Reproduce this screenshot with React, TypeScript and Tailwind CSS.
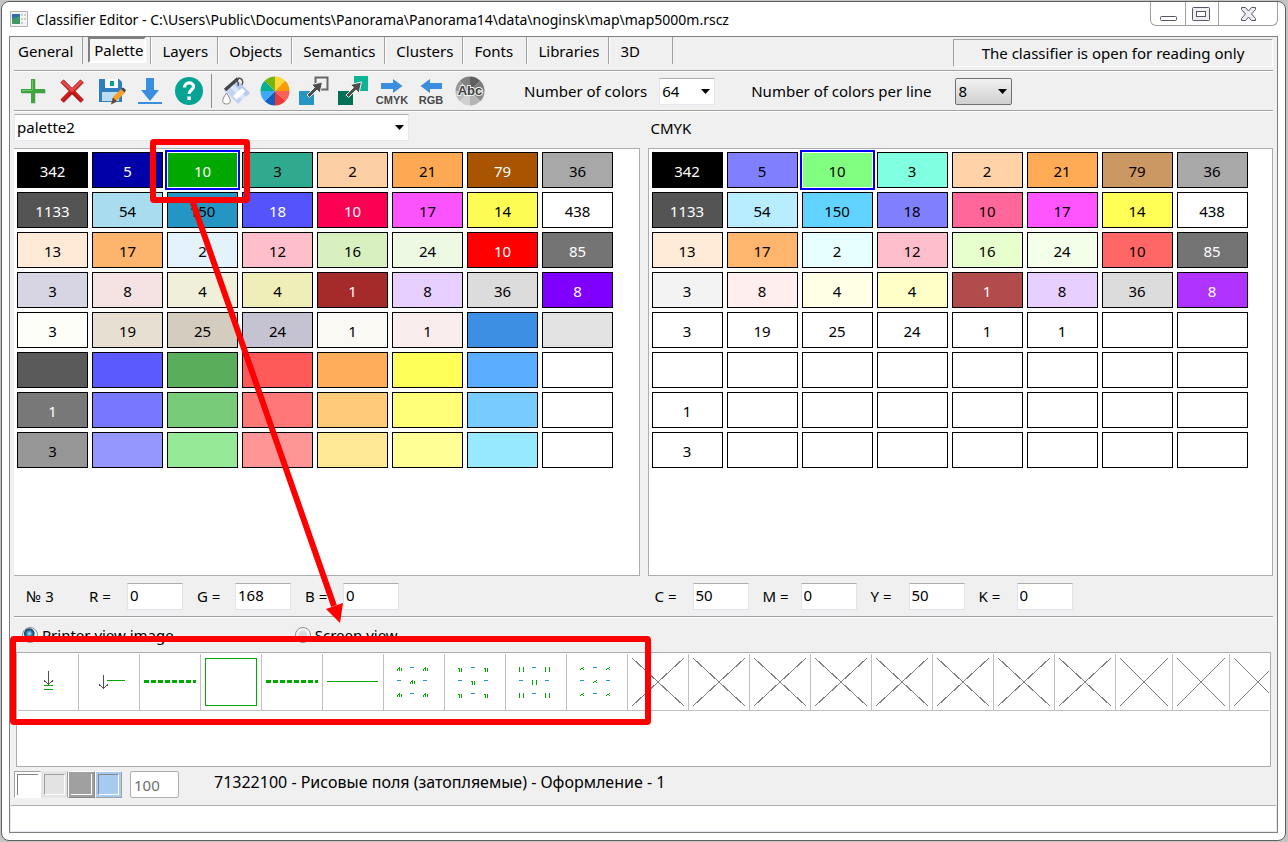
import type { ReactNode } from 'react'

// [background, usage count]; a light count is used on dark cells
type Cell = [string, string?, boolean?]

const RGB_CELLS: Cell[] = [
  ['#000000', '342', true], ['#0000a8', '5', true], ['#00a800', '10', true], ['#30aa8f', '3'],
  ['#fcd0a4', '2'], ['#fda954', '21'], ['#a85400', '79', true], ['#a8a8a8', '36'],
  ['#545454', '1133', true], ['#a8dcee', '54'], ['#2596c4', '150'], ['#5454fc', '18', true],
  ['#fc0054', '10', true], ['#fc54fc', '17'], ['#fcfc54', '14'], ['#ffffff', '438'],
  ['#ffead7', '13'], ['#fdb46c', '17'], ['#e4f3fb', '2'], ['#ffbecb', '12'],
  ['#d8efbf', '16'], ['#eef9e4', '24'], ['#ff0000', '10', true], ['#747474', '85', true],
  ['#d7d5e3', '3'], ['#f4e3e2', '8'], ['#f0efd9', '4'], ['#efeeb8', '4'],
  ['#a52a2a', '1', true], ['#e7d0ff', '8'], ['#dcdcdc', '36'], ['#8000ff', '8', true],
  ['#fdfef8', '3'], ['#e8dfd3', '19'], ['#d5ccc0', '25'], ['#c5c3d2', '24'],
  ['#fbf9f4', '1'], ['#f9eeed', '1'], ['#3c8fe2'], ['#e3e3e3'],
  ['#5a5a5a'], ['#5a5aff'], ['#5aad5a'], ['#ff5a5a'], ['#ffad5a'], ['#ffff5a'], ['#5aadff'], ['#ffffff'],
  ['#787878', '1', true], ['#7878ff'], ['#78cb78'], ['#ff7878'], ['#ffcb78'], ['#ffff78'], ['#78cbff'], ['#ffffff'],
  ['#969696', '3'], ['#9696ff'], ['#96e996'], ['#ff9696'], ['#ffe996'], ['#ffff96'], ['#96e9ff'], ['#ffffff'],
]

const CMYK_CELLS: Cell[] = [
  ['#000000', '342', true], ['#8080ff', '5'], ['#80ff80', '10'], ['#80ffe0', '3'],
  ['#ffd3a7', '2'], ['#ffaa55', '21'], ['#cb9864', '79'], ['#a8a8a8', '36'],
  ['#545454', '1133', true], ['#b8ecff', '54'], ['#62d2ff', '150'], ['#8080ff', '18'],
  ['#ff6699', '10'], ['#ff55ff', '17'], ['#ffff55', '14'], ['#ffffff', '438'],
  ['#ffebd8', '13'], ['#ffb56d', '17'], ['#e7ffff', '2'], ['#ffbecb', '12'],
  ['#e6ffcd', '16'], ['#f3ffe8', '24'], ['#ff6666', '10'], ['#747474', '85', true],
  ['#f3f3f3', '3'], ['#ffeeed', '8'], ['#ffffe6', '4'], ['#ffffc8', '4'],
  ['#b24c4c', '1', true], ['#e7d0ff', '8'], ['#dcdcdc', '36'], ['#b033ff', '8', true],
  ['#ffffff', '3'], ['#ffffff', '19'], ['#ffffff', '25'], ['#ffffff', '24'],
  ['#ffffff', '1'], ['#ffffff', '1'], ['#ffffff'], ['#ffffff'],
  ...Array.from({ length: 8 }, (): Cell => ['#ffffff']),
  ['#ffffff', '1'], ...Array.from({ length: 7 }, (): Cell => ['#ffffff']),
  ['#ffffff', '3'], ...Array.from({ length: 7 }, (): Cell => ['#ffffff']),
]

const SELECTED = 2

function PaletteGrid({ cells }: { cells: Cell[] }) {
  return (
    <div className="grid grid-cols-[repeat(8,71px)] gap-1">
      {cells.map(([color, count, light], i) => (
        <button
          key={i}
          type="button"
          aria-label={`Color ${i + 1}`}
          style={{ backgroundColor: color }}
          className={`h-9 border pt-0.5 text-center ${light ? 'text-white' : 'text-black'} ${
            i === SELECTED ? 'border-white ring-2 ring-[#0000ff]' : 'border-black'
          }`}
        >
          {count}
        </button>
      ))}
    </div>
  )
}

function Divider() {
  return <div className="mx-1 h-0.5 border-t border-[#a0a0a0] bg-white" />
}

const TABS = ['General', 'Palette', 'Layers', 'Objects', 'Semantics', 'Clusters', 'Fonts', 'Libraries', '3D']

function Tabs() {
  return (
    <nav className="flex h-[27px]">
      {TABS.map((tab) =>
        tab === 'Palette' ? (
          <div key={tab} className="border-r border-[#a0a0a0] pr-1 pl-[5px]">
            <button
              type="button"
              className="h-[26px] border-2 border-r-white border-b-white border-t-[#808080] border-l-[#808080] bg-[#f7f7f7] pr-px pl-1"
            >
              {tab}
            </button>
          </div>
        ) : (
          <button
            key={tab}
            type="button"
            className={`border-r border-[#a0a0a0] pr-[9px] text-left ${
              tab === 'General' ? 'pl-2' : 'min-w-16 border-l border-l-white pl-2.5'
            }`}
          >
            {tab}
          </button>
        ),
      )}
    </nav>
  )
}

function Tool({ label, children }: { label: string; children: ReactNode }) {
  return (
    <button type="button" aria-label={label} className="flex h-[38px] w-[39px] items-center justify-center">
      <svg viewBox="0 0 32 32" className="size-8">
        {children}
      </svg>
    </button>
  )
}

// Eight equal slices of a disc, clockwise from twelve o'clock
function Slices({ colors }: { colors: string[] }) {
  const point = (n: number) => {
    const a = (n * Math.PI) / 4
    return `${16 + 14.5 * Math.sin(a)} ${16 - 14.5 * Math.cos(a)}`
  }
  return (
    <>
      {colors.map((c, i) => (
        <path key={i} fill={c} d={`M16 16L${point(i)}A14.5 14.5 0 0 1 ${point(i + 1)}Z`} />
      ))}
    </>
  )
}

function DiagonalArrow() {
  return (
    <path
      d="M9 20l7.500-7.500-3-3L24.500 7 22 18l-3-3-7.500 7.500z"
      fill="#4d4d4d"
      stroke="#f0f0f0"
      strokeWidth="1"
    />
  )
}

function Toolbar() {
  return (
    <div className="flex h-[38px] items-center pl-[3px]">
      <Tool label="Add">
        <path d="M14.5 4.5h4v10h10v4h-10v10h-4v-10h-10v-4h10z" fill="#a8b8a8" />
        <path d="M14 4h4v10h10v4H18v10h-4V18H4v-4h10z" fill="#3fa63f" />
        <path d="M15 5h1v10h-1zM5 15h10v1H5z" fill="#6cc66c" />
      </Tool>
      <Tool label="Delete">
        <path d="M6.5 6.5l20 20M26.5 6.5l-20 20" stroke="#b0a8a8" strokeWidth="4.5" />
        <path d="M6 6l20 20M26 6L6 26" stroke="#b81414" strokeWidth="4.5" />
        <path d="M6 6l10 9.5L26 6" fill="none" stroke="#e04a4a" strokeWidth="3" />
        <path d="M14 16l-8 10M18 16l8 10" fill="none" stroke="#d42020" strokeWidth="2" />
      </Tool>
      <Tool label="Save">
        <path d="M4 4h20l3 3v20H4z" fill="#2e7fc0" />
        <path d="M10 4h13v9H10z" fill="#fff" />
        <path d="M15 6h4v5h-4z" fill="#00a090" />
        <path d="M7 17h17v9H7z" fill="#bcdcf2" />
        <path d="M16 28l2-6 8-8 4 3.5-8 8z" fill="#f5a02c" />
        <path d="M16 29.5l2-7 4 4z" fill="#5a4640" />
        <path d="M26 14l2-1.5 3 2.5-1.5 2.5z" fill="#444" />
      </Tool>
      <Tool label="Download">
        <path d="M12 3h8v12h5l-9 11-9-11h5z" fill="#3a8ee0" />
        <path d="M4 27h24v2H4z" fill="#3a8ee0" />
      </Tool>
      <Tool label="Help">
        <circle cx="16" cy="16" r="14" fill="#04a394" />
        <path
          d="M11.5 12.5c0-6 9-6 9-1 0 3.5-4.5 3.5-4.5 7.5"
          fill="none"
          stroke="#fff"
          strokeWidth="3.2"
        />
        <path d="M14.3 21.5h3.5V25h-3.5z" fill="#fff" />
      </Tool>
      <div className="mr-1 ml-[3px] h-[34px] w-px bg-[#8c8c8c]" />
      <Tool label="Fill">
        <path d="M4 16L17 5l13 13-12 11z" fill="#dbe5f8" />
        <path d="M17 5l13 13-4 3.5L13 8.5z" fill="#b4c9f0" />
        <path d="M10 12l12 13-4 4L6 16z" fill="#c3d2f0" />
        <path d="M13 21l9-8 3.5 3.5-9 8z" fill="#fff" />
        <path d="M5 15L18 3.5" stroke="#444" strokeWidth="3.2" />
        <path d="M18 3c4 0 6 3 4 7M15 6c3 0 4 2 3 5" fill="none" stroke="#555" strokeWidth="1.5" />
        <path d="M6.5 18c-6 8-4 11 0 11s6-3 0-11z" fill="#fff" stroke="#8a8a8a" />
      </Tool>
      <Tool label="Color wheel">
        <Slices
          colors={['#fdd734', '#f89c04', '#fc6058', '#ec3838', '#1460c0', '#3caaf8', '#06b08c', '#76b410']}
        />
      </Tool>
      <Tool label="Copy color">
        <path d="M1 16h15v14H1z" fill="#2596c4" />
        <path d="M17.5 2.5h12v12h-12z" fill="none" stroke="#666" strokeWidth="2" />
        <DiagonalArrow />
      </Tool>
      <Tool label="Replace color">
        <path d="M1 16h15v14H1z" fill="#007058" />
        <path d="M17 1h14v15H17z" fill="#0cb496" />
        <DiagonalArrow />
      </Tool>
      <Tool label="To CMYK">
        <path d="M5 8h12V4l9.5 7-9.5 7v-4H5z" fill="#3a8ee0" />
        <text x="16" y="29" textAnchor="middle" fontSize="11" className="fill-[#484848] font-['Liberation_Sans',sans-serif] font-bold">
          CMYK
        </text>
      </Tool>
      <Tool label="To RGB">
        <path d="M27 8H15V4l-9.5 7 9.5 7v-4h12z" fill="#3a8ee0" />
        <text x="16" y="29" textAnchor="middle" fontSize="11" className="fill-[#484848] font-['Liberation_Sans',sans-serif] font-bold">
          RGB
        </text>
      </Tool>
      <Tool label="Names">
        <Slices
          colors={['#606060', '#7c7c7c', '#8c8c8c', '#b4b4b4', '#d0d0d0', '#bcbcbc', '#989898', '#808080']}
        />
        <text
          x="16"
          y="20"
          textAnchor="middle"
          fontSize="13"
          stroke="#f0f0f0"
          strokeWidth="2"
          paintOrder="stroke"
          className="fill-[#404040] font-['Liberation_Sans',sans-serif] font-bold"
        >
          Abc
        </text>
      </Tool>
      <label className="ml-[35px] flex items-center gap-3">
        Number of colors
        <Select value="64" className="w-14 border-[#e3e9ef] border-t-[#abadb3] bg-white pl-0.5" />
      </label>
      <label className="ml-9 flex items-center gap-[23px]">
        Number of colors per line
        <Select
          value="8"
          className="w-[57px] rounded-xs border-[#707070] bg-linear-to-b from-[#f2f2f2] to-[#cfcfcf] pl-[3px]"
        />
      </label>
    </div>
  )
}

function Select({ value, label, className }: { value: string; label?: string; className: string }) {
  return (
    <span className="relative flex w-fit">
      <select aria-label={label} defaultValue={value} className={`h-[27px] appearance-none border ${className}`}>
        <option>{value}</option>
      </select>
      <svg viewBox="0 0 9 5" className="pointer-events-none absolute top-[11px] right-[5px] h-[5px] w-[9px]">
        <path d="M0 0h9L4.5 5z" />
      </svg>
    </span>
  )
}

function Field({ name, value }: { name: string; value: string }) {
  return (
    <label className="flex items-center">
      <span className="w-[38px]">{name} =</span>
      <input
        defaultValue={value}
        className="h-[27px] w-14 border border-[#dfe4ee] border-t-[#abadb3] bg-white pb-0.5 pl-0.5"
      />
    </label>
  )
}

function ViewOption({ label, checked }: { label: string; checked?: boolean }) {
  return (
    <label className="flex items-center gap-1">
      <input
        type="radio"
        name="view"
        defaultChecked={checked}
        className="size-4 appearance-none rounded-full border border-[#8e8f8f] bg-[radial-gradient(#d8dadc_35%,#fafafa_60%)] checked:bg-[radial-gradient(circle_at_45%_40%,#bfe9fb_0%,#2f7fae_25%,#123e66_42%,#f4f4f4_50%)]"
      />
      {label}
    </label>
  )
}

// Blue ticks and green marks alternate over a 3x3 lattice
function Pattern({ mark }: { mark: string }) {
  const marks = [[13, 13], [39, 13], [26, 26], [13, 39], [39, 39]]
  const ticks = [[26, 13], [13, 26], [39, 26], [26, 39]]
  return (
    <>
      {marks.map(([x, y], i) => (
        <path key={i} d={mark} transform={`translate(${x} ${y})`} stroke="#00a800" fill="none" />
      ))}
      {ticks.map(([x, y], i) => (
        <path key={i} d={`M${x} ${y + 0.5}h4`} stroke="#2596c4" />
      ))}
    </>
  )
}

const DASHES = <path d="M4 27.5h52" stroke="#00a800" strokeWidth="3" strokeDasharray="5 2" />

const SIGNS: ReactNode[] = [
  <>
    <path d="M30.5 17v13M26 26.5l4 3.5h1l4-3.5" stroke="#505050" fill="none" />
    <path d="M26 31.5h9M26 35.5h9" stroke="#00a800" />
  </>,
  <>
    <path d="M24.5 21v13M20 30.5l4 3.5h1l4-3.5" stroke="#505050" fill="none" />
    <path d="M28 26.5h18" stroke="#00a800" />
  </>,
  DASHES,
  <rect x="4.5" y="4.5" width="51" height="47" fill="none" stroke="#00a800" />,
  DASHES,
  <path d="M4 27.5h51" stroke="#00a800" />,
  <Pattern mark="M.5 2v2M1.5 1v1M2.5 0v4M4.5 1v3" />,
  <Pattern mark="M0 1.5h2M1.5 1v4M3.5 1v4" />,
  <Pattern mark="M.5 0v5M4.5 0v5" />,
  <Pattern mark="M0 2.5h1M1 1.5h2M3 .5h1M3 2.5h1" />,
]

function SignStrip() {
  return (
    <div className="mx-1.5 h-[115px] overflow-hidden border border-[#abadb3] bg-white p-px">
      <div className="flex overflow-hidden">
        {Array.from({ length: 21 }, (_, i) => (
          <div
            key={i}
            className={`h-[57px] shrink-0 border-r border-b border-[#c0c0c0] ${i < 18 ? 'w-[61px]' : 'w-[57px]'}`}
          >
            <svg viewBox={i < 18 ? '0 0 60 56' : '0 0 56 56'} className="h-14 w-full" shapeRendering="crispEdges">
              {SIGNS[i] ?? <path d={i < 18 ? 'M4 4l52 48M56 4L4 52' : 'M4 4l48 48M52 4L4 52'} stroke="#808080" />}
            </svg>
          </div>
        ))}
      </div>
    </div>
  )
}

// Red callout: a frame round the chosen color, an arrow, a frame round its signs
function Callout() {
  return (
    <svg className="pointer-events-none absolute top-0 left-0 h-[740px] w-[660px]" fill="none" stroke="#ff0000">
      <rect x="153" y="142" width="94" height="58" rx="1" strokeWidth="6" />
      <rect x="13" y="639" width="635" height="83" rx="1" strokeWidth="6" />
      <path d="M192 200L334 606" strokeWidth="6" />
      <path d="M340 623l-14-14 17-6z" fill="#ff0000" stroke="none" />
    </svg>
  )
}

function TitleBar() {
  return (
    <header className="flex h-[34px] items-start pl-2">
      <svg viewBox="0 0 18 16" className="mt-[9px] h-4 w-[18px]">
        <path d="M.5.5h17v15H.5z" fill="#f4f4f4" stroke="#b0b0b0" />
        <path d="M2 3h8v10H2z" fill="#2f6cb0" />
        <path d="M2 8l8-3v8H2z" fill="#3d9a68" />
        <path d="M11 3h2v2h-2zM11 7h2v2h-2zM11 11h2v2h-2zM14 3h2v2h-2zM14 7h2v2h-2z" fill="#c8ccd0" />
      </svg>
      <h1 className="mt-2 ml-2 grow text-sm leading-5">
        Classifier Editor - C:\Users\Public\Documents\Panorama\Panorama14\data\noginsk\map\map5000m.rscz
      </h1>
      <div className="mr-[7px] flex h-6 divide-x divide-[#a0a0a0] rounded-b-md border border-t-0 border-[#a0a0a0]">
        <button type="button" aria-label="Minimize" className="w-[35px]">
          <svg viewBox="0 0 34 23" className="h-[23px] w-[34px]">
            <rect x="9.5" y="14.5" width="16" height="4" rx="1" fill="#fff" stroke="#535666" />
          </svg>
        </button>
        <button type="button" aria-label="Maximize" className="w-[33px]">
          <svg viewBox="0 0 32 23" className="h-[23px] w-8">
            <rect x="6.5" y="5.5" width="17" height="13" rx="1" fill="#eee" stroke="#535666" />
            <rect x="10.5" y="9.5" width="9" height="5" fill="#fff" stroke="#535666" />
          </svg>
        </button>
        <button type="button" aria-label="Close" className="w-[58px]">
          <svg viewBox="0 0 58 23" className="h-[23px] w-[58px]">
            <path
              d="M22.5 5.5h4l3 3.5 3-3.5h4v2l-4 4.5 4 4.5v2h-4l-3-3.5-3 3.5h-4v-2l4-4.5-4-4.5z"
              fill="#eee"
              stroke="#535666"
            />
          </svg>
        </button>
      </div>
    </header>
  )
}

function Swatches() {
  return (
    <div className="flex">
      <button type="button" aria-label="White background" className="size-[27px] border border-r-white border-b-white border-t-[#a0a0a0] border-l-[#a0a0a0] bg-white p-0.5">
        <span className="block size-full border-t border-l border-[#808080]" />
      </button>
      <button type="button" aria-label="Light background" className="size-[27px] border border-[#e8e8e8] border-r-[#a0a0a0] bg-[#e3e3e3] p-0.5">
        <span className="block size-full border border-r-white border-b-white border-t-[#a0a0a0] border-l-[#a0a0a0]" />
      </button>
      <button type="button" aria-label="Gray background" className="size-[27px] border border-white border-r-[#888888] border-b-[#888888] bg-[#a0a0a0] p-0.5">
        <span className="block size-full border-r border-b border-white" />
      </button>
      <button type="button" aria-label="Blue background" className="size-[27px] border border-white border-r-[#a0a0a0] border-b-[#a0a0a0] bg-[#a6caf0] p-0.5">
        <span className="block size-full border border-r-white border-b-white border-t-[#888888] border-l-[#888888]" />
      </button>
    </div>
  )
}

export default function App() {
  return (
    <div className="relative flex min-h-screen flex-col bg-[#c4c4c4] pt-px pr-0.5 pb-px pl-px font-['Noto_Sans','Open_Sans',sans-serif] text-[15px] leading-5 text-black">
      <div className="flex grow flex-col rounded-lg border border-[#606060] bg-white">
        <TitleBar />
        <main className="mx-[7px] mb-[7px] flex grow flex-col border border-[#808080] bg-[#f0f0f0]">
          <div className="flex h-[33px] items-start justify-between pr-1">
            <Tabs />
            <p className="mt-0.5 w-80 border border-r-white border-b-white border-t-[#a0a0a0] border-l-[#a0a0a0] py-[3px] text-center">
              The classifier is open for reading only
            </p>
          </div>
          <Divider />
          <Toolbar />
          <Divider />
          <div className="mx-1 grid h-9 grid-cols-2 gap-2 pt-0.5">
            <Select
              label="Palette"
              value="palette2"
              className="w-[395px] border-[#e3e9ef] border-t-[#abadb3] bg-white pb-0.5 pl-0.5"
            />
            <h2 className="pt-1 pl-[3px]">CMYK</h2>
          </div>
          <div className="mx-1 grid grow grid-cols-2 gap-2">
            <section className="border border-l-0 border-[#abadb3] bg-white p-[3px]">
              <PaletteGrid cells={RGB_CELLS} />
            </section>
            <section className="border border-[#abadb3] bg-white p-[3px]">
              <PaletteGrid cells={CMYK_CELLS} />
            </section>
          </div>
          <div className="mx-1 grid h-10 grid-cols-2 gap-2">
            <div className="flex items-center gap-3.5 pl-3">
              <span className="w-[49px]">№ 3</span>
              <Field name="R" value="0" />
              <Field name="G" value="168" />
              <Field name="B" value="0" />
            </div>
            <div className="flex items-center gap-3.5 pl-[7px]">
              <Field name="C" value="50" />
              <Field name="M" value="0" />
              <Field name="Y" value="50" />
              <Field name="K" value="0" />
            </div>
          </div>
          <Divider />
          <div className="flex h-[34px] items-center gap-[121px] pl-3">
            <ViewOption label="Printer view image" checked />
            <ViewOption label="Screen view" />
          </div>
          <SignStrip />
          <div className="flex h-[38px] items-start pt-1 pl-1">
            <Swatches />
            <input
              aria-label="Scale"
              defaultValue="100"
              disabled
              className="ml-2 h-[27px] w-[49px] rounded-xs border border-[#afafaf] bg-white pl-[3px] text-[#6d6d6d]"
            />
            <span className="mt-px ml-[35px] text-base leading-5">
              71322100 - Рисовые поля (затопляемые) - Оформление - 1
            </span>
          </div>
          <footer className="h-[27px] rounded-xs border border-[#e3e9ef] border-t-[#abadb3] bg-white" />
        </main>
      </div>
      <Callout />
    </div>
  )
}
